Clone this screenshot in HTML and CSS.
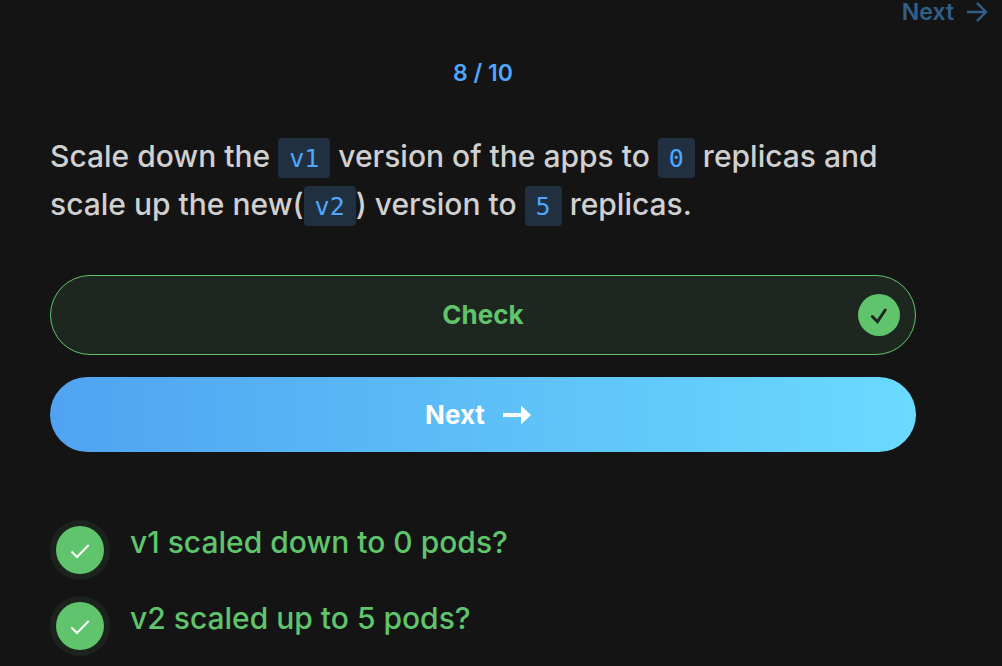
FILE: index.html
```html
<!DOCTYPE html>
<html lang="en">
<head>
<meta charset="utf-8">
<meta name="viewport" content="width=device-width, initial-scale=1">
<title>Step 8 of 10</title>
<link rel="stylesheet" href="styles.css">
</head>
<body>
<header class="topbar">
  <a class="skip" href="#next">Next
    <svg class="skip-icon" viewBox="0 0 22 22" aria-hidden="true"><path d="M1 11h19M11 2l9 9-9 9"/></svg>
  </a>
</header>
<main class="step">
  <p class="progress">8 / 10</p>
  <p class="task">Scale down the <code class="chip">v1</code> version of the apps to <code class="chip">0</code> replicas and scale up the new(<code class="chip">v2</code>) version to <code class="chip">5</code> replicas.</p>
  <div class="actions">
    <button class="btn check" type="button">
      <span class="label">Check</span>
      <svg class="check-icon" viewBox="0 0 42 42" aria-hidden="true"><circle cx="21" cy="21" r="21"/><path d="M14.300 22.500l5.200 5.200 7.700-11.700"/></svg>
    </button>
    <button class="btn next" id="next" type="button">
      <span class="label">Next</span>
      <svg class="next-icon" viewBox="0 0 28 20" aria-hidden="true"><path d="M0 8h18V0.500L28 10 18 19.500V12H0z"/></svg>
    </button>
  </div>
  <ul class="results">
    <li class="result">
      <svg class="result-icon" viewBox="0 0 60 60" aria-hidden="true"><circle class="halo" cx="30" cy="30" r="30"/><circle class="disc" cx="30" cy="30" r="24"/><path d="M21.500 31.500l5.500 5.500 11.700-12"/></svg>
      <span>v1 scaled down to 0 pods?</span>
    </li>
    <li class="result">
      <svg class="result-icon" viewBox="0 0 60 60" aria-hidden="true"><circle class="halo" cx="30" cy="30" r="30"/><circle class="disc" cx="30" cy="30" r="24"/><path d="M21.500 31.500l5.500 5.500 11.700-12"/></svg>
      <span>v2 scaled up to 5 pods?</span>
    </li>
  </ul>
</main>
</body>
</html>
```
FILE: styles.css
```css
* { box-sizing: border-box; }

body {
  margin: 0;
  background: #141414;
  color: #d0d0d0;
  font-family: Inter, "Liberation Sans", sans-serif;
}

.topbar {
  display: flex;
  justify-content: flex-end;
  padding: 0 14px;
}

.skip {
  display: flex;
  align-items: center;
  gap: 12px;
  color: #306089;
  font-size: 23px;
  font-weight: 600;
  line-height: 24px;
  text-decoration: none;
}

.skip-icon {
  width: 22px;
  height: 22px;
  fill: none;
  stroke: currentColor;
  stroke-width: 2.4;
}

.step { padding: 36px 86px 0 50px; }

.progress {
  margin: 0;
  color: #4ea7fc;
  font-size: 23px;
  font-weight: 600;
  line-height: 26px;
  text-align: center;
}

.task {
  margin: 46px 0 0;
  font-size: 30px;
  font-weight: 500;
  line-height: 48px;
}

.chip {
  display: inline-block;
  padding: 2px 11px 0;
  border-radius: 4px;
  background: #203040;
  color: #4ea7fc;
  font-family: "DejaVu Sans Mono", monospace;
  font-size: 25px;
  font-weight: 400;
  line-height: 38px;
}

.actions {
  display: grid;
  gap: 22px;
  margin-top: 47px;
}

.btn {
  display: flex;
  align-items: center;
  justify-content: center;
  border: 0;
  border-radius: 40px;
  font-family: inherit;
  font-size: 26px;
  font-weight: 700;
  line-height: 32px;
}

.check {
  display: grid;
  grid-template-columns: 42px 1fr 42px;
  padding: 18px 15px;
  border: 1px solid #5fc46b;
  background: #1e271f;
  color: #5fc46b;
}

.check .label { grid-column: 2; }

.check-icon {
  width: 42px;
  height: 42px;
  fill: #5fc46b;
}

.check-icon path {
  fill: none;
  stroke: #1e271f;
  stroke-width: 3;
  stroke-linecap: round;
}

.next {
  gap: 18px;
  padding: 22px 20px 21px 10px;
  background: linear-gradient(90deg, #50a3f0, #6adaff);
  color: #fff;
}

.next-icon {
  width: 28px;
  height: 20px;
  fill: currentColor;
}

.results {
  display: grid;
  gap: 16px;
  margin: 68px 0 0;
  padding: 0;
  list-style: none;
}

.result {
  display: flex;
  gap: 20px;
  color: #5fc46b;
  font-size: 30px;
  font-weight: 500;
  line-height: 44px;
}

.result-icon {
  flex: none;
  width: 60px;
  height: 60px;
}

.halo { fill: #1b231c; }
.disc { fill: #5fc46b; }

.result-icon path {
  fill: none;
  stroke: #fff;
  stroke-width: 2;
}
```
